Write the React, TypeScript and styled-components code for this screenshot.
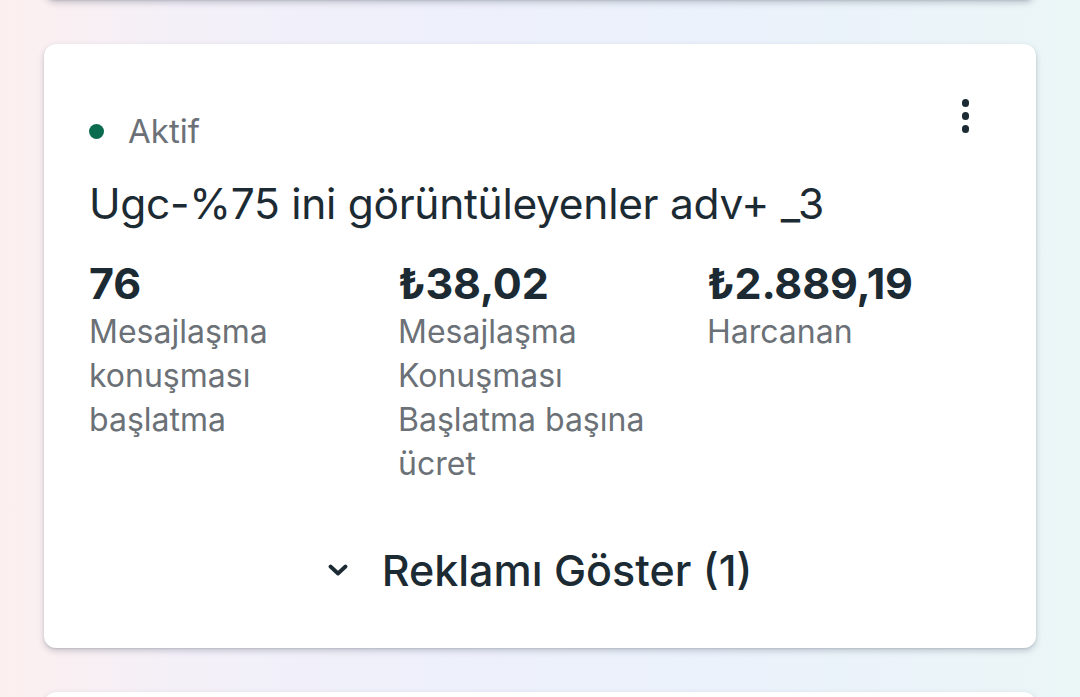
import React from 'react'
import styled, { createGlobalStyle } from 'styled-components'

const GlobalStyle = createGlobalStyle`
    html,
    body {
        margin: 0;
        padding: 0;
    }

    body {
        font-family: Inter, 'Noto Sans', sans-serif;
        background: linear-gradient(
            90deg,
            #fcefef 0%,
            #f4f0f8 16%,
            #eef0fb 40%,
            #ebf2fb 70%,
            #ebf6f7 100%
        );
        min-height: 697px;
        overflow: hidden;
    }
`

const List = styled.div`
    display: flex;
    flex-direction: column;
    gap: 44px;
    margin-top: -80px;
    padding: 0 44px;
`

const Card = styled.div<{ $height?: number }>`
    background: #ffffff;
    border-radius: 12px;
    box-shadow: 0 3px 6px rgba(40, 50, 70, 0.22), 0 1px 2px rgba(40, 50, 70, 0.12);
    min-height: ${(p) => (p.$height ? `${p.$height}px` : 'auto')};
    position: relative;
`

const Body = styled.div`
    padding: 44px 45px 53px;
`

const Status = styled.div`
    align-items: center;
    color: #6b7177;
    display: flex;
    font-size: 33px;
    gap: 24px;
    height: 86px;
`

const Dot = styled.span`
    background: #0b6b4f;
    border-radius: 50%;
    display: inline-block;
    flex-shrink: 0;
    height: 15px;
    width: 15px;
`

const Menu = styled.button`
    align-items: center;
    background: none;
    border: 0;
    display: flex;
    flex-direction: column;
    gap: 5.5px;
    padding: 0;
    position: absolute;
    right: 67px;
    top: 55px;

    span {
        background: #1c2b33;
        border-radius: 50%;
        height: 7.5px;
        width: 7.5px;
    }
`

const Title = styled.h2`
    color: #1c2b33;
    font-size: 42.5px;
    font-weight: 400;
    letter-spacing: -0.3px;
    line-height: 48px;
    margin: 6px 0 31px;
`

const Metrics = styled.div`
    display: grid;
    grid-template-columns: 309px 309px 1fr;
`

const Value = styled.div`
    color: #1c2b33;
    font-size: 43px;
    font-weight: 700;
    line-height: 48px;
    letter-spacing: -0.2px;
`

const Label = styled.div`
    color: #6b7177;
    font-size: 32px;
    line-height: 44px;
    margin-top: 3px;
    max-width: 272px;
`

const Toggle = styled.button`
    align-items: center;
    background: none;
    border: 0;
    color: #1c2b33;
    cursor: pointer;
    display: flex;
    font-family: inherit;
    font-size: 43px;
    font-weight: 500;
    gap: 34px;
    justify-content: center;
    line-height: 50px;
    margin: 59px auto 0;
    padding: 0;
`

const metrics = [
    { value: '76', label: 'Mesajlaşma konuşması başlatma' },
    { value: '₺38,02', label: 'Mesajlaşma Konuşması Başlatma başına ücret' },
    { value: '₺2.889,19', label: 'Harcanan' },
]

function App() {
    return (
        <>
            <GlobalStyle />
            <List>
                <Card $height={80} />
                <Card>
                    <Menu aria-label="Menü">
                        <span />
                        <span />
                        <span />
                    </Menu>
                    <Body>
                        <Status>
                            <Dot />
                            Aktif
                        </Status>
                        <Title>Ugc-%75 ini görüntüleyenler adv+ _3</Title>
                        <Metrics>
                            {metrics.map((m) => (
                                <div key={m.value}>
                                    <Value>{m.value}</Value>
                                    <Label>{m.label}</Label>
                                </div>
                            ))}
                        </Metrics>
                        <Toggle>
                            <svg width="20" height="14" viewBox="0 0 20 14">
                                <path
                                    d="M2.5 3.5 L10 10.5 L17.5 3.5"
                                    fill="none"
                                    stroke="#1c2b33"
                                    strokeWidth="3.8"
                                    strokeLinecap="round"
                                    strokeLinejoin="round"
                                />
                            </svg>
                            Reklamı Göster (1)
                        </Toggle>
                    </Body>
                </Card>
                <Card $height={200} />
            </List>
        </>
    )
}

export default App
